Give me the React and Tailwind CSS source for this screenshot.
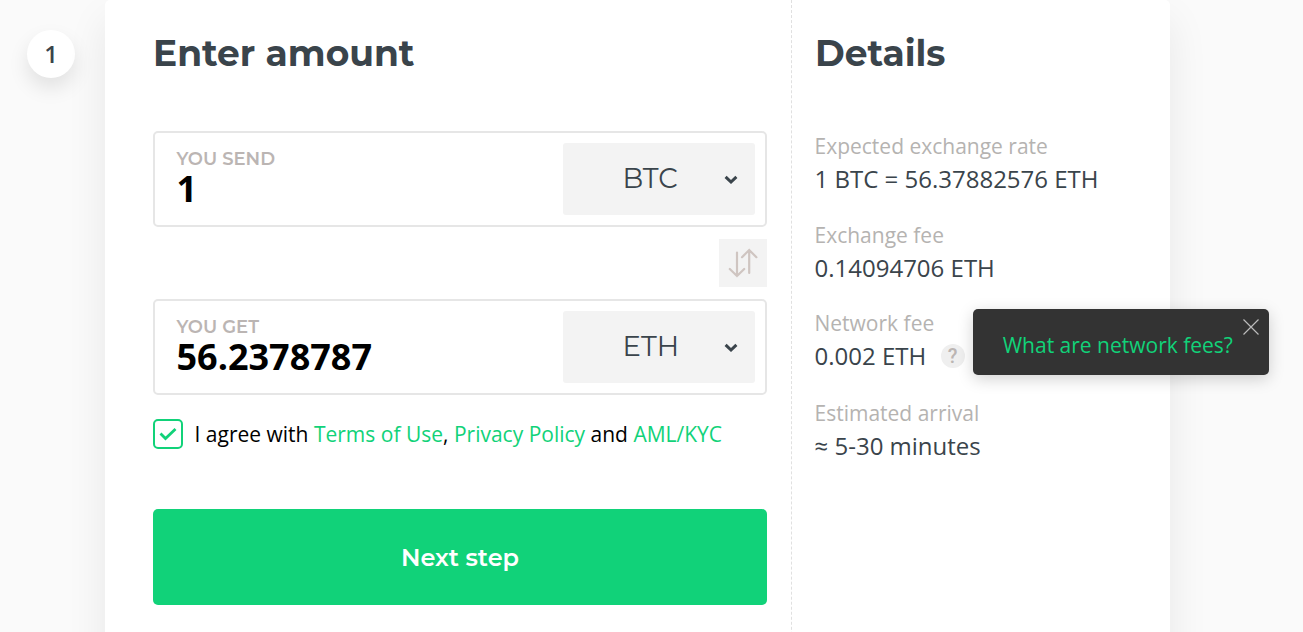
import React, { useState } from 'react';

const links = 'text-[#11d279]';

function Chevron() {
    return (
        <svg width="14" height="10" viewBox="0 0 14 10" fill="none">
            <path d="M1.6 1.8L7 7L12.4 1.8" stroke="#3a444b" strokeWidth="3"/>
        </svg>
    );
}

function AmountField({ label, value, currency }) {
    return (
        <div className="flex h-24 items-center justify-between rounded-[5px] border-2 border-[#e6e6e6] pl-[21.5px] pr-2.5">
            <div className="flex h-full flex-col pt-3.5">
                <span className="font-[Montserrat,sans-serif] text-[18px] leading-6 font-semibold text-[#bbb5b3]">
                    {label}
                </span>
                <span className="text-[36px] leading-9 font-bold text-black">{value}</span>
            </div>
            <button className="flex h-[72px] w-48 items-center rounded-[3px] bg-[#f3f3f3] pl-[59.5px] pr-[17px]">
                <span className="flex-1 text-left font-[Montserrat,sans-serif] text-[27.5px]">{currency}</span>
                <span className="pt-px"><Chevron /></span>
            </button>
        </div>
    );
}

function DetailItem({ label, className = '', children }) {
    return (
        <div className={`flex flex-col ${className}`}>
            <span className="pt-0.5 text-[21px] leading-[30px] text-[#b5b3b1]">{label}</span>
            <div className="text-[24px] leading-9">{children}</div>
        </div>
    );
}

function NetworkTooltip({ onClose }) {
    return (
        <div className="absolute top-1/2 left-8 z-10 flex h-[66px] w-[296px] -translate-y-[47px] items-center rounded-[5px] bg-[#333] pt-[5px] pl-[30px] font-['Open_Sans',sans-serif] font-normal shadow-[0_4px_16px_rgba(0,0,0,0.18)]">
            <a href="#" className="text-[21px] leading-8 whitespace-nowrap text-[#11d279]">What are network fees?</a>
            <button onClick={onClose} className="absolute top-2.5 right-2.5">
                <svg width="16" height="16" viewBox="0 0 16 16" fill="none">
                    <path d="M0.5 0.5L15.5 15.5M15.5 0.5L0.5 15.5" stroke="#bbb" strokeWidth="1.2"/>
                </svg>
            </button>
        </div>
    );
}

function App() {
    const [agreed, setAgreed] = useState(true);
    const [showTooltip, setShowTooltip] = useState(true);

    return (
        <div className="flex h-screen overflow-hidden bg-[#fafafa] font-['Open_Sans',sans-serif] text-[#3a444b]">
            {/* Step number */}
            <div className="w-[105px] shrink-0 pt-[30px] pl-[27px]">
                <div className="flex size-12 items-center justify-center rounded-full bg-white text-[24px] font-semibold shadow-[0_10px_20px_rgba(0,0,0,0.1)]">
                    1
                </div>
            </div>

            <div className="flex h-[700px] w-[1065px] shrink-0 rounded-t-[5px] bg-white shadow-[0_20px_40px_rgba(0,0,0,0.08)]">
                <div className="w-[687px] shrink-0 border-r border-dashed border-[#e0e0e0] pr-6 pl-12">
                    <h2 className="h-[131px] pt-[29px] font-[Montserrat,sans-serif] text-[36px] leading-[48px] font-bold">
                        Enter amount
                    </h2>

                    <AmountField label="YOU SEND" value="1" currency="BTC" />
                    <div className="flex justify-end py-3">
                        <button className="flex size-12 items-center justify-center bg-[#f3f3f3]">
                            <svg width="30" height="30" viewBox="0 0 30 30" fill="none" stroke="#cfc5c1" strokeWidth="2.2" strokeLinecap="round">
                                <path d="M9 4.5V28M1.8 21L9 28L16.2 21M21.2 25V2M14 9.2L21.2 2L28.4 9.2"/>
                            </svg>
                        </button>
                    </div>
                    <AmountField label="YOU GET" value="56.2378787" currency="ETH" />

                    {/* Agreement */}
                    <div className="mt-6 flex items-center gap-[11.5px]">
                        <button
                            onClick={() => setAgreed(!agreed)}
                            className="flex size-[30px] items-center justify-center rounded-[5px] border-2 border-[#11d279]"
                        >
                            {agreed && (
                                <svg width="18" height="14" viewBox="0 0 18 14" fill="none">
                                    <path d="M1.5 6.5L6.5 11.5L16.5 2" stroke="#11d279" strokeWidth="2.8"/>
                                </svg>
                            )}
                        </button>
                        <p className="text-[21px] leading-[30px] text-black">
                            I agree with <a href="#" className={links}>Terms of Use</a>, <a href="#" className={links}>Privacy Policy</a> and <a href="#" className={links}>AML/KYC</a>
                        </p>
                    </div>

                    <button className="mt-[60px] h-24 w-full rounded-[5px] bg-[#11d279] pt-0.5 font-[Montserrat,sans-serif] text-[24px] font-semibold text-white">
                        Next step
                    </button>
                </div>

                {/* Exchange details */}
                <div className="flex-1 pl-[22.5px]">
                    <h2 className="h-[129px] pt-[29px] pl-[0.5px] font-[Montserrat,sans-serif] text-[36px] leading-[48px] font-bold">
                        Details
                    </h2>
                    <div className="flex flex-col gap-[21px]">
                        <DetailItem label="Expected exchange rate">1 BTC = 56.37882576 ETH</DetailItem>
                        <DetailItem label="Exchange fee">0.14094706 ETH</DetailItem>
                        <DetailItem label="Network fee" className="-mt-px mb-px">
                            <div className="flex items-center gap-[14.5px]">
                                <span>0.002 ETH</span>
                                <span className="relative flex size-6 items-center justify-center rounded-full bg-[#efefef] font-[Roboto,sans-serif] text-[20px] font-medium text-[#bbb5b3]">
                                    ?
                                    {showTooltip && <NetworkTooltip onClose={() => setShowTooltip(false)} />}
                                </span>
                            </div>
                        </DetailItem>
                        <DetailItem label="Estimated arrival">≈ 5-30 minutes</DetailItem>
                    </div>
                </div>
            </div>
        </div>
    );
}

export default App;
